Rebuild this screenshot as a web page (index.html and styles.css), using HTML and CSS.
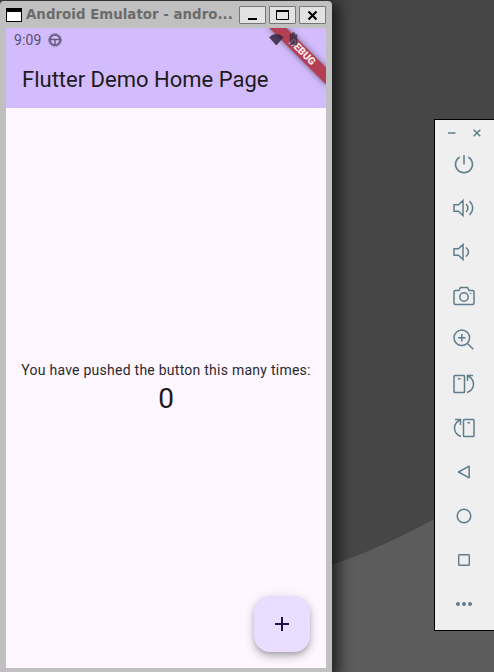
FILE: index.html
```html
<!DOCTYPE html>
<html lang="en">
<head>
<meta charset="utf-8">
<title>Android Emulator</title>
<link rel="stylesheet" href="styles.css">
</head>
<body>
<main class="desktop">
  <svg class="wallpaper" viewBox="0 0 494 672"><path d="M300 575Q367 556 434 519L494 482V672H300Z" fill="#5c5c5c"/></svg>

  <section class="window">
    <header class="titlebar">
      <span class="app-icon"></span>
      <span class="window-title">Android Emulator - andro...</span>
      <div class="controls">
        <button aria-label="Minimize"><svg viewBox="0 0 25 16"><path d="M8 12h9" stroke="#000" stroke-width="2"/></svg></button>
        <button aria-label="Maximize"><svg viewBox="0 0 25 16"><path d="M6.500 3.500h12v9h-12z" fill="none" stroke="#000"/><path d="M6 4h13" stroke="#000" stroke-width="2"/></svg></button>
        <button aria-label="Close"><svg viewBox="0 0 25 16"><path d="M8.500 4.500l8 8M16.500 4.500l-8 8" stroke="#000" stroke-width="2.100"/></svg></button>
      </div>
    </header>
    <div class="screen">
      <div class="appbar">
        <div class="status">
          <span>9:09</span>
          <svg class="status-app" viewBox="0 0 14 14" fill="none" stroke="#65577f"><circle cx="7" cy="7" r="5.200" stroke-width="1.800"/><circle cx="7" cy="7" r="6.400" stroke-width="1" stroke-dasharray="1.300 1.210"/><path d="M2 6.500h10M7 6.500V12" stroke-width="1.400"/></svg>
        </div>
        <h1>Flutter Demo Home Page</h1>
      </div>
      <div class="counter">
        <p>You have pushed the button this many times:</p>
        <strong>0</strong>
      </div>
      <div class="banner">DEBUG</div>
      <svg class="signals" viewBox="0 0 32 16" fill="#30263c"><path d="M0 5.200Q7.300-1.200 14.600 5.200L7.300 13.600Z" opacity=".85"/><path d="M20.700 2.200H23V.6h3v1.600h2.300v11h-7.600z" opacity=".75"/></svg>
      <button class="fab" aria-label="Increment"><svg viewBox="0 0 24 24"><path d="M5 12h14M12 5v14" stroke="#21124d" stroke-width="2"/></svg></button>
    </div>
  </section>

  <aside class="toolbar">
    <div class="toolbar-head">
      <svg viewBox="0 0 10 10"><path d="M1 5h7.500"/></svg>
      <svg viewBox="0 0 10 10"><path d="M1.700 1.700l6.600 6.600M8.300 1.700L1.700 8.300"/></svg>
    </div>
    <div class="tools">
      <svg viewBox="0 0 24 24"><path d="M12 3v9.500M7.700 5A8.500 8.500 0 1 0 16.300 5"/></svg>
      <svg viewBox="0 0 24 24"><path d="M2 8.700h4.500L11 4.500v15L6.500 15.300H2zM14 8q4 4 0 8M17.500 5q6.500 7 0 14"/></svg>
      <svg viewBox="0 0 24 24"><path d="M2 8.700h4.500L11 4.500v15L6.500 15.300H2zM14 7.500q5 4.500 0 9"/></svg>
      <svg viewBox="0 0 24 24"><path d="M3.500 6.500H7L8.500 3.500h7L17 6.500h3.500a1.500 1.500 0 0 1 1.500 1.500v11a1.500 1.500 0 0 1-1.500 1.500h-17A1.500 1.500 0 0 1 2 19V8a1.500 1.500 0 0 1 1.500-1.500z"/><circle cx="12" cy="13" r="4.200"/><circle cx="18.800" cy="9.500" r=".8" class="dot"/></svg>
      <svg viewBox="0 0 24 24"><circle cx="9.800" cy="9.800" r="7.800"/><path d="M15.500 15.500l5.800 5.800M9.800 6v7.600M6 9.800h7.600"/></svg>
      <svg viewBox="0 0 24 24"><rect x="2" y="3.500" width="10.500" height="17" rx=".8"/><path d="M6 6.700h2.500M15 20.500C23.500 17 23.500 8 16 4M21 3.500h-5.500v5.500"/></svg>
      <svg viewBox="0 0 24 24"><rect x="11.500" y="3.500" width="10.500" height="17" rx=".8"/><path d="M15.500 6.700H18M9 20.500C.5 17 .5 8 8 4M3 3.500h5.500v5.500"/></svg>
      <svg viewBox="0 0 24 24"><path d="M17.200 6.200v11.600L6.500 12z" stroke-linejoin="round"/></svg>
      <svg viewBox="0 0 24 24"><circle cx="12" cy="12" r="6.800"/></svg>
      <svg viewBox="0 0 24 24"><rect x="6.700" y="6.700" width="10.600" height="10.600" rx=".8"/></svg>
      <svg viewBox="0 0 24 24" class="more"><circle cx="6" cy="12" r="2"/><circle cx="12" cy="12" r="2"/><circle cx="18" cy="12" r="2"/></svg>
    </div>
  </aside>
</main>
</body>
</html>
```
FILE: styles.css
```css
* { box-sizing: border-box; }
body { margin: 0; overflow: hidden; }
button { padding: 0; border: 0; }
svg { display: block; }
.desktop { position: relative; width: 494px; height: 672px; overflow: hidden; background: #464646; }
.wallpaper { width: 494px; height: 672px; }
.window {
  position: absolute; left: 0; top: 1px; width: 332px; height: 673px;
  padding: 0 6px; background: #c0c0c0; border-radius: 4px 4px 0 0;
  box-shadow: 4px 3px 14px 3px rgba(0,0,0,.62);
}
.titlebar { display: flex; align-items: center; height: 27px; }
.app-icon { width: 16px; height: 14px; border: 1px solid #000; border-top-width: 4px; background: #fff; margin-top: 1px; }
.window-title { margin: 0 0 0 4px; width: 213px; font: bold 13.33px/18px "DejaVu Sans", sans-serif; letter-spacing: .04px; color: #6b6b6b; white-space: nowrap; }
.controls { display: flex; gap: 3px; }
.controls button { width: 27px; height: 18px; background: #e2e2e2; border: 1px solid #777; border-radius: 1px; }
.controls svg { width: 25px; height: 16px; }
.screen { position: relative; display: flex; flex-direction: column; width: 320px; height: 640px; overflow: hidden; background: #fef7ff; font-family: Roboto, sans-serif; color: #1d1b20; }
.appbar { height: 80px; background: #d3bcfd; }
.status { display: flex; align-items: center; height: 24px; padding-left: 8px; gap: 6px; font-size: 14px; letter-spacing: .15px; color: #5a4d70; }
.status-app { width: 14px; height: 14px; }
h1 { margin: 0 0 0 16px; font-size: 22px; line-height: 28px; padding-top: 14px; font-weight: 400; white-space: nowrap; }
.counter { flex: 1; display: flex; flex-direction: column; align-items: center; justify-content: center; }
.counter p { margin: 0; font-size: 14px; line-height: 20px; letter-spacing: .25px; white-space: nowrap; color: #2b292e; }
.counter strong { font-size: 28px; line-height: 36px; padding-top: 1px; margin-bottom: -1px; font-weight: 400; }
.banner {
  position: absolute; left: 280px; top: 28px; width: 80px; height: 12px;
  transform-origin: 40px -28px; transform: rotate(45deg);
  background: #b23f54; box-shadow: 0 0 6px rgba(0,0,0,.5);
  color: #fbe7ec; font-size: 10.2px; line-height: 12px; font-weight: 900; text-align: center;
}
.signals { position: absolute; left: 263px; top: 4px; width: 32px; height: 16px; }
.fab { position: absolute; right: 16px; bottom: 16px; width: 56px; height: 56px; display: grid; place-items: center; border-radius: 16px; background: #eaddff; box-shadow: 0 3px 5px -1px rgba(0,0,0,.2), 0 6px 10px rgba(0,0,0,.14), 0 1px 12px rgba(0,0,0,.1); }
.fab svg { width: 24px; height: 24px; }
.toolbar { position: absolute; left: 434px; top: 119px; width: 62px; height: 512px; background: #efefef; border: 1px solid #000; }
.toolbar svg { fill: none; stroke: #607d8b; stroke-width: 1.5; }
.toolbar-head { display: flex; gap: 15px; padding: 8px 0 0 12px; }
.toolbar-head svg { width: 10px; height: 10px; }
.tools { display: flex; flex-direction: column; gap: 20px; padding: 14px 0 0 17px; }
.tools svg { width: 24px; height: 24px; }
.toolbar .more, .toolbar .dot { fill: #607d8b; stroke: none; }
```
